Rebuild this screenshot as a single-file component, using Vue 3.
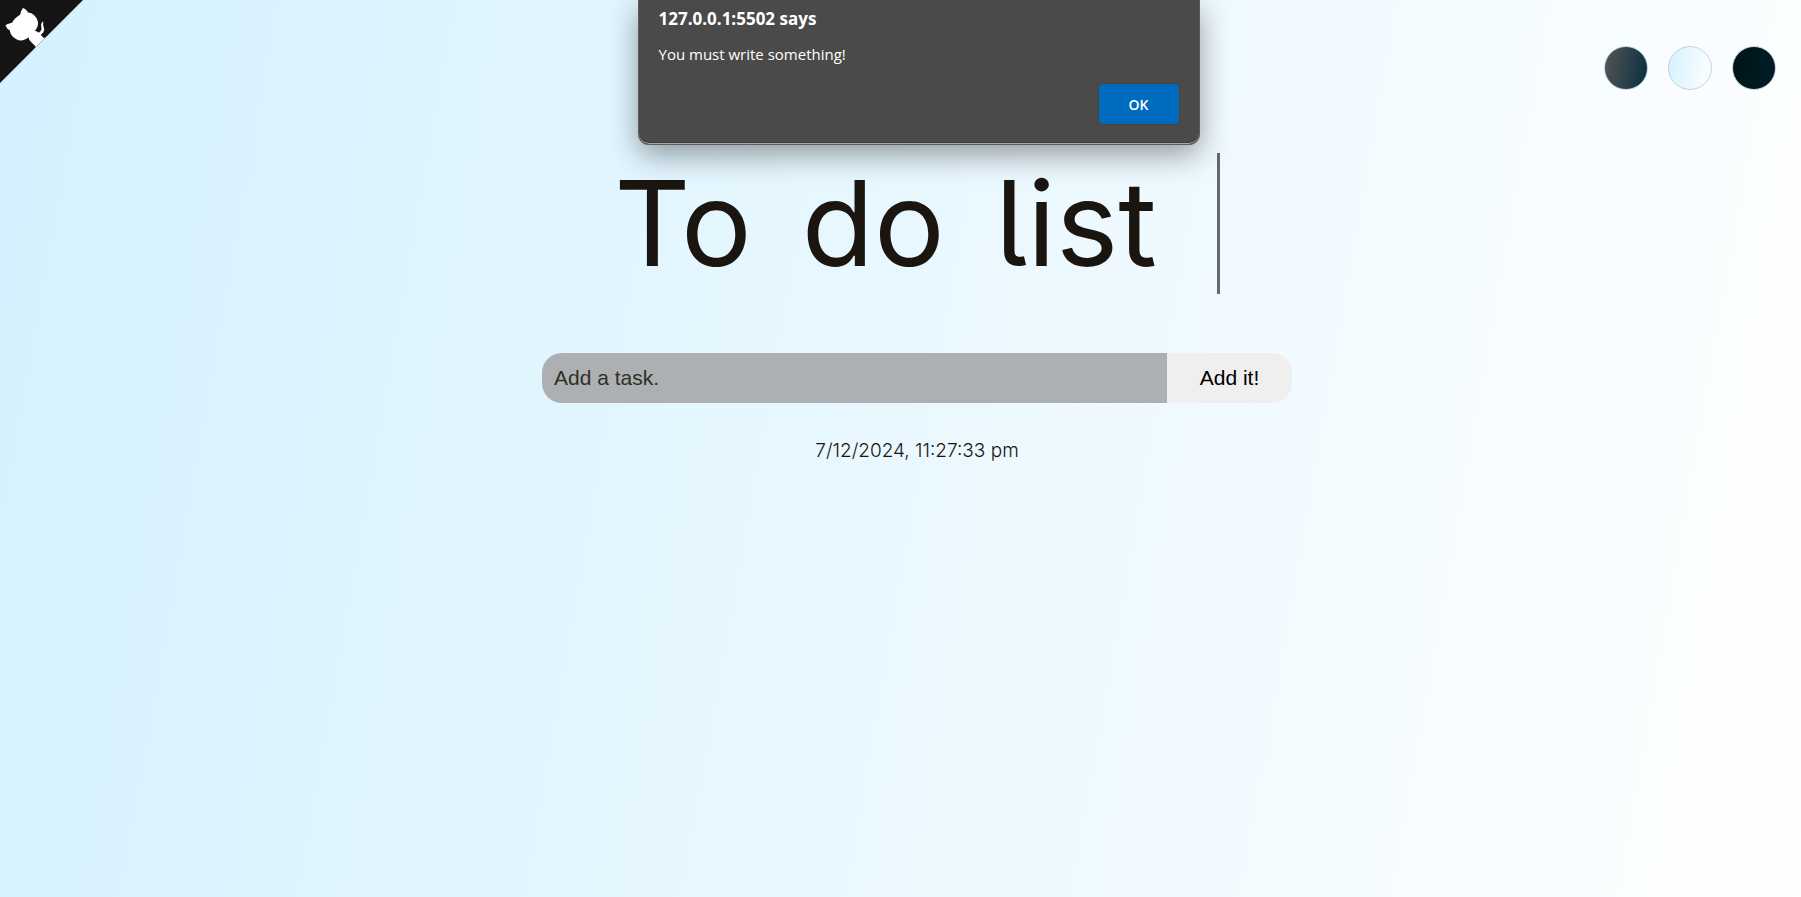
<script setup>
import { ref } from 'vue'

const themes = [
  { id: 'standard', label: 'Standard theme' },
  { id: 'light', label: 'Light theme' },
  { id: 'darker', label: 'Darker theme' }
]
const task = ref('')
const tasks = ref([])
const theme = ref('light')
const alertOpen = ref(true)

function addTask() {
  if (!task.value.trim()) {
    alertOpen.value = true
    return
  }
  tasks.value.push(task.value.trim())
  task.value = ''
}
</script>

<template>
  <div class="page" :class="theme">
    <a class="corner" href="#" aria-label="View source on GitHub">
      <svg viewBox="19.5 19.5 211 211" aria-hidden="true">
        <g transform="translate(250 0) scale(-1 1)">
          <path d="M0,0 L250,250 L250,0 Z" fill="#151513" />
          <path fill="#fff" d="M128.3,109.0 C113.8,99.7 119.0,89.6 119.0,89.6 C122.0,82.7 120.5,78.6 120.5,78.6 C119.2,72.0 123.4,76.3 123.4,76.3 C127.3,80.9 125.5,87.3 125.5,87.3 C122.9,97.6 130.6,101.9 134.4,103.2" />
          <path fill="#fff" d="M115.0,115.0 C114.9,115.1 118.7,116.5 119.8,115.4 L133.7,101.6 C136.9,99.2 139.9,98.4 142.2,98.6 C133.8,88.0 127.5,74.4 143.8,58.0 C148.5,53.4 154.0,51.2 159.7,51.0 C160.3,49.4 163.2,43.6 171.4,40.1 C171.4,40.1 176.1,42.5 178.8,56.2 C183.1,58.6 187.2,61.8 190.9,65.4 C194.5,69.0 197.7,73.2 200.1,77.6 C213.8,80.2 216.3,84.9 216.3,84.9 C212.7,93.1 206.9,96.0 205.4,96.6 C205.1,102.4 203.0,107.8 198.3,112.5 C181.9,128.9 168.3,122.5 157.7,114.1 C157.9,116.9 156.7,120.9 152.7,124.9 L141.0,136.5 C139.8,137.7 141.6,141.9 141.8,141.8 Z" />
        </g>
      </svg>
    </a>

    <header class="themes">
      <button
        v-for="t in themes"
        :key="t.id"
        type="button"
        class="swatch"
        :class="t.id"
        :aria-label="t.label"
        @click="theme = t.id"
      ></button>
    </header>

    <main class="content">
      <h1 class="title"><span>To</span> <span>do</span> <span>list</span></h1>
      <form class="entry" @submit.prevent="addTask">
        <input v-model="task" type="text" placeholder="Add a task." aria-label="Add a task" />
        <button type="submit">Add it!</button>
      </form>
      <time class="clock" datetime="2024-12-07T23:27:33">7/12/2024, 11:27:33 pm</time>
      <ul v-if="tasks.length" class="tasks">
        <li v-for="(item, i) in tasks" :key="i">{{ item }}</li>
      </ul>
    </main>

    <div v-if="alertOpen" class="alert" role="alertdialog" aria-labelledby="alert-title" aria-describedby="alert-text">
      <h2 id="alert-title">127.0.0.1:5502 says</h2>
      <p id="alert-text">You must write something!</p>
      <button type="button" @click="alertOpen = false">OK</button>
    </div>
  </div>
</template>

<style>
body {
  margin: 0;
}
</style>

<style scoped>
.page {
  position: relative;
  box-sizing: border-box;
  min-height: 100vh;
  padding-top: 46px;
  color: #1a150e;
  font-family: Inter, "Liberation Sans", sans-serif;
}
.standard {
  background: linear-gradient(100deg, #575656, #062e3f);
}
.light {
  background: linear-gradient(100deg, #d4f1ff, #ffffff);
}
.darker {
  background: linear-gradient(100deg, #001214, #001f29);
}
.corner {
  position: absolute;
  top: 0;
  left: 0;
}
.corner svg {
  display: block;
  width: 83px;
  height: 83px;
}
.themes {
  display: flex;
  justify-content: flex-end;
  gap: 20px;
  padding-right: 25px;
}
.swatch {
  box-sizing: border-box;
  width: 44px;
  height: 44px;
  padding: 0;
  border: 1px solid #c5d3df;
  border-radius: 50%;
  background-origin: border-box;
  cursor: pointer;
}
.content {
  display: flex;
  flex-direction: column;
  align-items: center;
  padding: 63px 0 0 33px;
}
.title {
  display: flex;
  gap: 50px;
  margin: 0;
  padding-right: 60px;
  border-right: 3px solid #666a6c;
  font-size: 118px;
  font-feature-settings: "cv05";
  font-weight: 400;
  line-height: 141px;
  white-space: nowrap;
}
.entry {
  display: flex;
  width: 750px;
  max-width: 90%;
  height: 50px;
  margin-top: 59px;
}
.entry input,
.entry button {
  border: 0;
  font-family: "Liberation Sans", Arial, sans-serif;
  font-size: 21px;
}
.entry input {
  flex: 1;
  min-width: 0;
  padding: 0 12px;
  border-radius: 20px 0 0 20px;
  background: #adb0b3;
  color: #1a150e;
}
.entry input::placeholder {
  color: #302f25;
  opacity: 1;
}
.entry button {
  width: 125px;
  padding: 0;
  border-radius: 0 20px 20px 0;
  background: #efefef;
  color: #000;
}
.clock {
  margin-top: 36px;
  font-size: 19px;
  font-weight: 300;
  line-height: 24px;
}
.tasks {
  margin: 30px 0 0;
  font-size: 20px;
}
.alert {
  position: absolute;
  top: 0;
  left: 50%;
  box-sizing: border-box;
  display: flex;
  flex-direction: column;
  width: 562px;
  margin-left: -263px;
  padding: 8px 19px 19px 20px;
  border: 1px solid #605c5a;
  border-top: 0;
  border-radius: 0 0 11px 11px;
  background: #4a4a4a;
  box-shadow: inset 0 -1px #aaa9a7, inset 0 -2px #3c3c3c, 0 10px 30px rgba(0, 0, 0, 0.38);
  color: #fff;
  font-family: "Open Sans", "Noto Sans", sans-serif;
}
.alert h2,
.alert p {
  margin: 0;
  font-size: 15px;
  line-height: 22px;
}
.alert h2 {
  font-size: 17px;
}
.alert p {
  margin: 13px 0 18px;
}
.alert button {
  align-self: flex-end;
  width: 82px;
  height: 42px;
  padding: 0;
  border: 1px solid #4d4326;
  border-radius: 5px;
  background: #006cbf;
  color: #fff;
  font-family: inherit;
  font-size: 14px;
  font-weight: 600;
}
</style>
